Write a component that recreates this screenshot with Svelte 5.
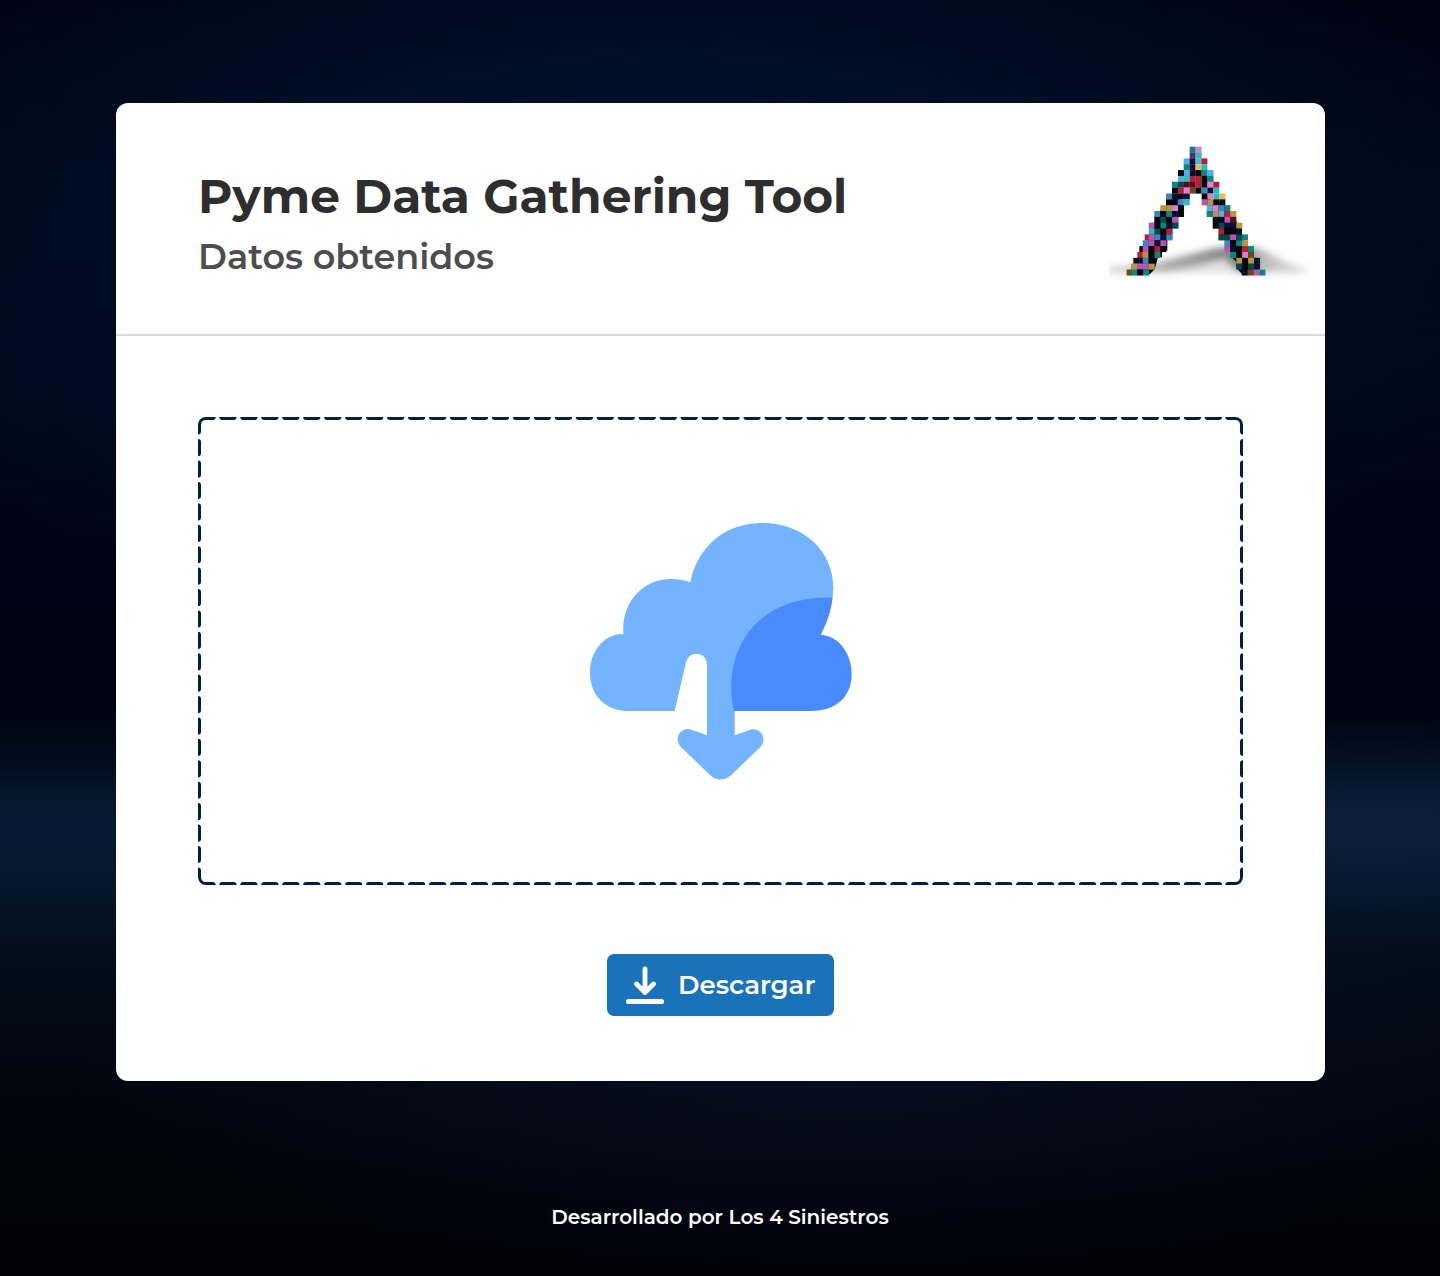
<script>
  // Mosaic palette, one letter per tile colour
  const palette = {
    k: '#03040a', n: '#080f32', t: '#0b8583', d: '#07484c', c: '#2fbcb8',
    b: '#3a87bf', l: '#5aaedb', p: '#b955b4', i: '#e07fd2', r: '#b51d3c',
    m: '#5c0a1c', g: '#b8963c', y: '#dfc052', o: '#6b4a12', u: '#5a2a80'
  };
  // Each row holds runs of tiles: [left edge, letters]
  const rows = [
    [[269, 'ti']],
    [[269, 'uc']],
    [[251, 'lnlr']],
    [[251, 'tnyc']],
    [[234, 'klnktl']],
    [[234, 'lcrrkt']],
    [[216, 'tdmmrkir']],
    [[216, 'kriokbnc']],
    [[198, 'bnkn'], [305, 'kicy']],
    [[198, 'kkbc'], [305, 'pgkn']],
    [[181, 'ggik'], [320, 'libt']],
    [[163, 'bktnk'], [320, 'tglrg']],
    [[163, 'kdkp'], [338, 'nkpm']],
    [[146, 'pktnd'], [338, 'kdnng']],
    [[146, 'cdkr'], [355, 'rkkn']],
    [[134, 'r'], [146, 'pbnb'], [355, 'ddpdt']],
    [[128, 'bpnp'], [373, 'bktg']],
    [[118, 'k'], [128, 'pkrk'], [373, 'pnkrt']],
    [[112, 'r'], [128, 'gkt'], [391, 'tkio']],
    [[100, 'nk'], [128, 'bk'], [409, 'gkgn']],
    [[93, 'gppg'], [409, 'dkdn']],
    [[80, 'o'], [94, 'tkt'], [425, 'nopt']]
  ];
  const pitch = 17.7;
  const tiles = rows.flatMap((runs, r) =>
    runs.flatMap(([x, s]) =>
      [...s].map((ch, i) => ({ x: x + i * pitch, y: 50 + r * 17.55, fill: palette[ch] }))
    )
  );
</script>

<main class="page">
  <section class="card">
    <header class="head">
      <div class="titles">
        <h1>Pyme Data Gathering Tool</h1>
        <h2>Datos obtenidos</h2>
      </div>
      <svg class="logo" viewBox="0 0 660 480" aria-hidden="true">
        <defs>
          <filter id="soft" x="-20%" y="-50%" width="140%" height="200%"><feGaussianBlur stdDeviation="11" /></filter>
          <linearGradient id="shade" gradientUnits="userSpaceOnUse" x1="27" x2="640" y1="0" y2="0">
            <stop offset="0" stop-color="#777" stop-opacity=".12" />
            <stop offset=".3" stop-color="#666" stop-opacity=".45" />
            <stop offset=".6" stop-color="#555" stop-opacity=".7" />
            <stop offset=".78" stop-color="#777" stop-opacity=".3" />
            <stop offset="1" stop-color="#999" stop-opacity="0" />
          </linearGradient>
          <clipPath id="floor"><rect x="27" y="320" width="633" height="130" /></clipPath>
        </defs>
        <g clip-path="url(#floor)">
          <path class="haze" d="M20 412 L160 396 L380 352 L470 354 L560 395 L630 420 L600 430 H20Z" filter="url(#soft)" />
          <path d="M30 418 L165 402 L250 378 L345 355 L470 354 L520 375 L560 400 L620 424 L410 422 L375 384 L290 406 L200 424 L30 428Z" fill="url(#shade)" filter="url(#soft)" />
        </g>
        <path class="leg" d="M236 194L246 226V256H235V293H217V328H202V362H186V382H174L164 418L150 432H97L128 400L150 300L182 240Z" />
        <path class="leg" d="M308 200V224L322 226V258L340 260V292L357 294V328L375 330V362L393 364V380L409 396V414L428 434H480L462 380H445L420 290L370 220Z" />
        {#each tiles as t}
          <rect x={t.x} y={t.y} width="18.1" height="18" fill={t.fill} />
        {/each}
      </svg>
    </header>

    <div class="body">
      <div class="drop">
        <svg class="frame" viewBox="0 0 1045 468" aria-hidden="true">
          <path class="across" d="M24.270 0H1022M24.270 468H1022" />
          <path class="down" d="M0 25.100V445M1045 25.100V445" />
          <path d="M0 14.500V8Q0 0 8 0H14.700M1030.300 0H1037Q1045 0 1045 8V14.500M1045 453.500V460Q1045 468 1037 468H1030.300M14.700 468H8Q0 468 0 460V453.500" />
        </svg>
        <svg class="cloud" viewBox="3 3 900 900" aria-hidden="true">
          <path fill="#74b3ff" d="M314 633H178C105 633 60 585 60 518C60 455 100 402 160 402C154 305 220 237 302 237Q334 237 361 247C382 140 465 69 577 69C700 69 790 152 790 265Q790 330 752 404L640 633H494V706L541 689C568 680 594 713 572 740L484 825Q452 852 420 825L332 740C309 713 335 679 364 689L411 706V493C410 452 355 451 348 487Z" />
          <path fill="#488bff" d="M787 293Q782 348 752 404C807 408 845 460 845 522C845 590 798 633 724 633H492C453 450 560 286 787 293Z" />
        </svg>
      </div>
      <button class="download">
        <svg viewBox="0 0 38 40" aria-hidden="true">
          <path d="M19 4V27M10.500 19L19 27.500L27.500 19M2.300 36.500H35.700" />
        </svg>
        <span>Descargar</span>
      </button>
    </div>
  </section>
  <footer>Desarrollado por Los 4 Siniestros</footer>
</main>

<style>
  :global(body) { margin: 0; background: #01030c; }
  .page {
    box-sizing: border-box;
    height: 1276px;
    padding-top: 103px;
    display: flex;
    flex-direction: column;
    align-items: center;
    font-family: Montserrat, Inter, sans-serif;
    background:
      radial-gradient(ellipse 860px 440px at 46% 250px, #001333 0%, rgba(0, 15, 42, .6) 60%, transparent 100%),
      radial-gradient(ellipse 300px 100px at 1370px 820px, rgba(20, 46, 86, .3), transparent 100%),
      radial-gradient(ellipse 760px 190px at 58% 1080px, rgba(9, 19, 40, .6), transparent 100%),
      linear-gradient(180deg, #000413 0, #000919 180px, #00081b 360px, #000313 580px, #000311 700px, #020c1a 755px, #06162e 797px, #081a33 835px, #06152a 890px, #04101d 940px, #030b17 1000px, #02060f 1080px, #01030a 1180px, #00020a 1276px);
  }
  .card {
    width: 1209px;
    height: 978px;
    margin-left: 1px;
    border-radius: 12px;
    background: #fff;
    overflow: hidden;
  }
  .head {
    box-sizing: border-box;
    height: 233px;
    display: flex;
    justify-content: space-between;
    padding: 27px 5px 0 82px;
    border-bottom: 2px solid #d9dadb;
  }
  .titles { padding-top: 37px; white-space: nowrap; }
  h1 { margin: 0; font-size: 47.100px; line-height: 58px; font-weight: 700; color: #2e2e2e; }
  h2 { margin: 6px 0 0; font-size: 35px; line-height: 52px; font-weight: 600; color: #4d4d4d; }
  .logo { width: 220px; height: 160px; flex: none; }
  .haze { fill: rgba(120, 120, 120, .22); }
  .leg { fill: #05070f; }
  .body { display: flex; flex-direction: column; align-items: center; padding-top: 81px; }
  .drop { display: grid; place-items: center; width: 1045px; height: 468px; border-radius: 8px; overflow: hidden; }
  .frame, .cloud { grid-area: 1 / 1; }
  .frame { width: 1045px; height: 468px; }
  .frame path { fill: none; stroke: #001f45; stroke-width: 6; stroke-linecap: round; }
  .frame .across { stroke-dasharray: 11.300 9.667; }
  .frame .down { stroke-dasharray: 11.200 10.210; }
  .cloud { width: 300px; height: 300px; }
  .download {
    display: flex;
    align-items: center;
    gap: 14px;
    width: 227px;
    height: 62px;
    margin-top: 69px;
    padding: 0 19px;
    border: 0;
    border-radius: 7px;
    background: #1a73b9;
    color: #fff;
    font: 600 26px/62px Montserrat, Inter, sans-serif;
  }
  .download svg { width: 38px; height: 40px; flex: none; }
  .download path { fill: none; stroke: #fff; stroke-width: 4.800; stroke-linecap: round; stroke-linejoin: round; }
  footer { margin-top: 122px; font-size: 20px; line-height: 28px; font-weight: 600; color: #fff; }
</style>
